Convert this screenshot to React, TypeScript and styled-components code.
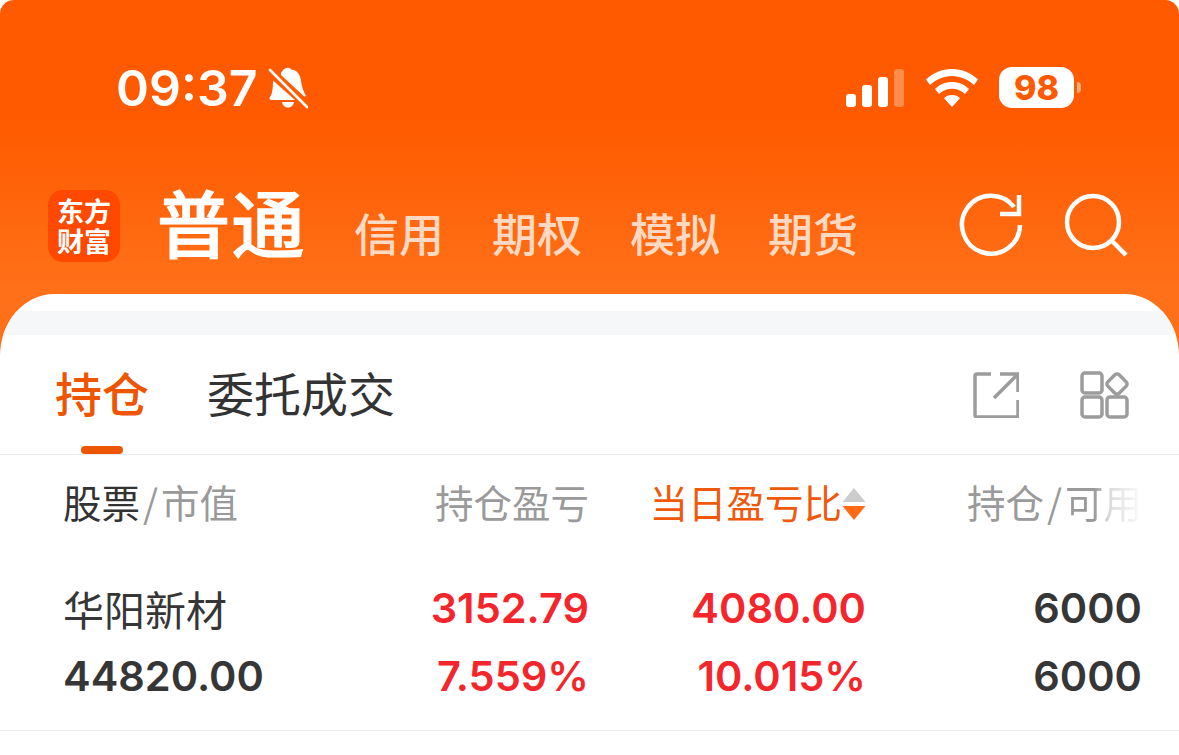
import React from 'react'
import styled, { createGlobalStyle } from 'styled-components'

const GlobalStyle = createGlobalStyle`
  html, body {
    margin: 0;
    padding: 0;
    background: #fff;
  }
  body {
    font-family: Inter, "Noto Sans CJK SC", sans-serif;
    overflow: hidden;
  }
`

const Page = styled.div`
  width: 1179px;
  height: 755px;
  overflow: hidden;
  background: linear-gradient(180deg, #ff5a00 0, #ff5a00 120px, #ff7018 290px, #ff7018 360px) no-repeat;
  background-size: 100% 360px;
  border-radius: 14px 14px 0 0;
`

const StatusBar = styled.div`
  height: 176px;
  box-sizing: border-box;
  padding: 62px 98px 0 116px;
  display: flex;
  justify-content: space-between;
  align-items: flex-start;
`
const TimeGroup = styled.div`
  display: flex;
  align-items: center;
  gap: 10px;
`
const Time = styled.div`
  font-size: 50px;
  line-height: 52px;
  font-weight: 600;
  color: #fff;
`
const StatusIcons = styled.div`
  display: flex;
  align-items: center;
  gap: 21px;
  padding-top: 5px;
`
const Signal = styled.div`
  display: flex;
  margin-right: 1px;
`
const Battery = styled.div`
  display: flex;
  align-items: center;
  gap: 3px;
`
const BatteryBody = styled.div`
  width: 75px;
  height: 41px;
  border-radius: 13px;
  background: #fff;
  color: #ff5a00;
  font-size: 34px;
  line-height: 41px;
  font-weight: 800;
  text-align: center;
`
const BatteryCap = styled.div`
  width: 4px;
  height: 11px;
  border-radius: 0 6px 6px 0;
  background: rgba(255, 255, 255, 0.5);
`

const NavBar = styled.div`
  height: 104px;
  display: flex;
  align-items: flex-start;
  padding: 14px 51px 0 48px;
`
const Logo = styled.div`
  width: 72px;
  height: 72px;
  box-sizing: border-box;
  margin-right: 37px;
  border-radius: 15px;
  background: #ff4800;
  color: #fff;
  font-family: "Noto Sans CJK SC", sans-serif;
  font-size: 27px;
  line-height: 30px;
  font-weight: 700;
  text-align: center;
  padding-top: 6px;
`
const Modes = styled.div`
  display: flex;
  align-items: flex-end;
  gap: 48px;
  flex: 1;
  margin-top: -18px;
`
const Mode = styled.div<{ $active?: boolean }>`
  font-family: "Noto Sans CJK SC", sans-serif;
  color: ${p => (p.$active ? '#fff' : 'rgba(255, 255, 255, 0.75)')};
  font-size: ${p => (p.$active ? '73px' : '45px')};
  line-height: ${p => (p.$active ? '96px' : '70px')};
  font-weight: 500;
  letter-spacing: ${p => (p.$active ? '1.5px' : '0')};
  -webkit-text-stroke: ${p => (p.$active ? '1.2px #fff' : '0')};
`
const NavActions = styled.div`
  display: flex;
  align-items: center;
  gap: 41px;
  margin-top: 3px;
`

const Sheet = styled.div`
  background: #fff;
  border-radius: 54px 54px 0 0 / 62px 62px 0 0;
  padding-top: 17px;
  height: 461px;
  box-sizing: border-box;
  overflow: hidden;
`
const Strip = styled.div`
  height: 24px;
  background: #f6f7f9;
`
const TabsRow = styled.div`
  height: 120px;
  box-sizing: border-box;
  border-bottom: 1px solid #ececec;
  display: flex;
  align-items: flex-start;
  padding: 0 49px 0 55px;
`
const Tab = styled.div<{ $active?: boolean }>`
  position: relative;
  height: 119px;
  margin-right: 58px;
  font-family: "Noto Sans CJK SC", sans-serif;
  font-size: 47px;
  line-height: 114px;
  font-weight: ${p => (p.$active ? 500 : 400)};
  color: ${p => (p.$active ? '#ee5500' : '#333')};
`
const TabMark = styled.div`
  position: absolute;
  left: 26px;
  bottom: 0;
  width: 42px;
  height: 8px;
  border-radius: 4px;
  background: #ee5500;
`
const TabActions = styled.div`
  margin-left: auto;
  display: flex;
  align-items: center;
  gap: 61px;
  padding-top: 36px;
`

const Row = styled.div<{ $head?: boolean }>`
  display: grid;
  grid-template-columns: 332px 194px 277px 276px;
  padding: 0 37px 0 63px;
  box-sizing: border-box;
  width: 1179px;
  height: ${p => (p.$head ? '119px' : '68px')};
  align-items: ${p => (p.$head ? 'start' : 'center')};
`
const HeadCell = styled.div<{ $right?: boolean; $hot?: boolean }>`
  font-family: "Noto Sans CJK SC", sans-serif;
  font-size: 38.5px;
  line-height: 92px;
  height: 92px;
  color: ${p => (p.$hot ? '#f0590c' : '#9a9a9a')};
  text-align: ${p => (p.$right ? 'right' : 'left')};
  white-space: nowrap;
`
const HeadStrong = styled.span`
  color: #333;
`
const Slash = styled.span`
  color: #9a9a9a;
  margin: 0 3px;
`
const FadeText = styled.span`
  background: linear-gradient(90deg, #9a9a9a 0, #9a9a9a 38%, rgba(154, 154, 154, 0.35) 58%, rgba(154, 154, 154, 0.04) 100%);
  -webkit-background-clip: text;
  background-clip: text;
  color: transparent;
`
const SortCell = styled(HeadCell)`
  display: flex;
  justify-content: flex-end;
  align-items: center;
`
const SortGlyph = styled.svg`
  margin-top: 6px;
`
const Cell = styled.div<{ $right?: boolean; $up?: boolean; $name?: boolean }>`
  font-family: ${p => (p.$name ? '"Noto Sans CJK SC"' : 'Inter')}, "Noto Sans CJK SC", sans-serif;
  font-size: ${p => (p.$name ? '41px' : '41.5px')};
  font-weight: ${p => (p.$name ? 400 : 600)};
  color: ${p => (p.$up ? '#f5262b' : '#363636')};
  text-align: ${p => (p.$right ? 'right' : 'left')};
  white-space: nowrap;
`
const Body = styled.div`
  padding-bottom: 20px;
  border-bottom: 1px solid #ececec;
`

const BellOff = () => (
  <svg width="40" height="42" viewBox="0 0 40 42">
    <path
      fill="#fff"
      d="M13 6c1.500-3 4-5 6.500-5.200 2-.2 3 .8 3.500 1.700 6 .5 9 5 9.800 10 .6 4 1.300 9 4.700 15.500.6 1.200-.3 1.500-1.300 1.500L13 8zM5 13.500 27 33H4c-2.500 0-3.300-1.600-2-3 2.500-3 3-10 3-16.500zM14 35h12c-.5 3.500-3 5.500-6 5.500s-5.500-2-6-5.500z"
    />
    <path stroke="#fff" strokeWidth="2.600" strokeLinecap="round" d="M2 3l37 37" />
  </svg>
)

const SignalIcon = () => (
  <svg width="58" height="38" viewBox="0 0 58 38">
    <rect x="0" y="25" width="10" height="13" rx="3" fill="#fff" />
    <rect x="16" y="16" width="10" height="22" rx="3" fill="#fff" />
    <rect x="32" y="8" width="10" height="30" rx="3" fill="#fff" />
    <rect x="48" y="0" width="10" height="38" rx="3" fill="#fff" fillOpacity="0.3" />
  </svg>
)

const WifiIcon = () => (
  <svg width="52" height="38" viewBox="0 0 52 38">
    <path fill="#fff" d="M26 0c10 0 19 4 26 10.500l-4 5.500C42 10.500 34.500 7 26 7S10 10.500 4 16L0 10.500C7 4 16 0 26 0z" />
    <path fill="#fff" d="M26 13c6.500 0 12.500 2.500 17 7l-4 5c-3.500-3.300-8-5.300-13-5.300s-9.500 2-13 5.300l-4-5c4.500-4.500 10.500-7 17-7z" />
    <path fill="#fff" d="M26 26c3.200 0 6 1.200 8 3.200L26 38l-8-8.800c2-2 4.800-3.200 8-3.200z" />
  </svg>
)

const RefreshIcon = () => (
  <svg width="64" height="64" viewBox="0 0 64 64" fill="none" stroke="#fff" strokeWidth="4.500">
    <path d="M61 32A29 29 0 1 1 55 14" />
    <path d="M60 2V21H41" />
  </svg>
)

const SearchIcon = () => (
  <svg width="64" height="64" viewBox="0 0 64 64" fill="none" stroke="#fff" strokeWidth="4.500">
    <circle cx="29" cy="29" r="26" />
    <path d="M47 47l15 15" />
  </svg>
)

const ShareIcon = () => (
  <svg width="46" height="46" viewBox="0 0 46 46" fill="none" stroke="#9c9c9c" strokeWidth="3.500">
    <path d="M18 2H4a2 2 0 0 0-2 2v39a2 2 0 0 0 2 2h39a2 2 0 0 0 2-2V28" />
    <path d="M45 20V2H27M44 3 21 26" />
  </svg>
)

const AppsIcon = () => (
  <svg width="50" height="48" viewBox="0 0 50 48" fill="none" stroke="#9c9c9c" strokeWidth="3.500">
    <rect x="2" y="2" width="20" height="20" rx="3" />
    <rect x="2" y="26" width="20" height="20" rx="3" />
    <rect x="27" y="26" width="20" height="20" rx="3" />
    <rect x="29" y="5" width="16" height="16" rx="3" transform="rotate(45 37 13)" />
  </svg>
)

const SortIcon = () => (
  <SortGlyph width="24" height="32" viewBox="0 0 24 32">
    <path d="M12 0l11.500 14H.5z" fill="#cccccc" />
    <path d="M12 32 .5 18h23z" fill="#ff6a13" />
  </SortGlyph>
)

const modes = ['信用', '期权', '模拟', '期货']

const App = () => (
  <Page>
    <GlobalStyle />
    <StatusBar>
      <TimeGroup>
        <Time>09:37</Time>
        <BellOff />
      </TimeGroup>
      <StatusIcons>
        <Signal>
          <SignalIcon />
        </Signal>
        <WifiIcon />
        <Battery>
          <BatteryBody>98</BatteryBody>
          <BatteryCap />
        </Battery>
      </StatusIcons>
    </StatusBar>
    <NavBar>
      <Logo>
        东方
        <br />
        财富
      </Logo>
      <Modes>
        <Mode $active>普通</Mode>
        {modes.map(mode => (
          <Mode key={mode}>{mode}</Mode>
        ))}
      </Modes>
      <NavActions>
        <RefreshIcon />
        <SearchIcon />
      </NavActions>
    </NavBar>
    <Sheet>
      <Strip />
      <TabsRow>
        <Tab $active>
          持仓
          <TabMark />
        </Tab>
        <Tab>委托成交</Tab>
        <TabActions>
          <ShareIcon />
          <AppsIcon />
        </TabActions>
      </TabsRow>
      <Row $head>
        <HeadCell>
          <HeadStrong>股票</HeadStrong>
          <Slash>/</Slash>市值
        </HeadCell>
        <HeadCell $right>持仓盈亏</HeadCell>
        <SortCell $hot>
          当日盈亏比
          <SortIcon />
        </SortCell>
        <HeadCell $right>
          持仓<Slash>/</Slash>
          <FadeText>可用</FadeText>
        </HeadCell>
      </Row>
      <Body>
        <Row>
          <Cell $name>华阳新材</Cell>
          <Cell $right $up>3152.79</Cell>
          <Cell $right $up>4080.00</Cell>
          <Cell $right>6000</Cell>
        </Row>
        <Row>
          <Cell>44820.00</Cell>
          <Cell $right $up>7.559%</Cell>
          <Cell $right $up>10.015%</Cell>
          <Cell $right>6000</Cell>
        </Row>
      </Body>
    </Sheet>
  </Page>
)

export default App
